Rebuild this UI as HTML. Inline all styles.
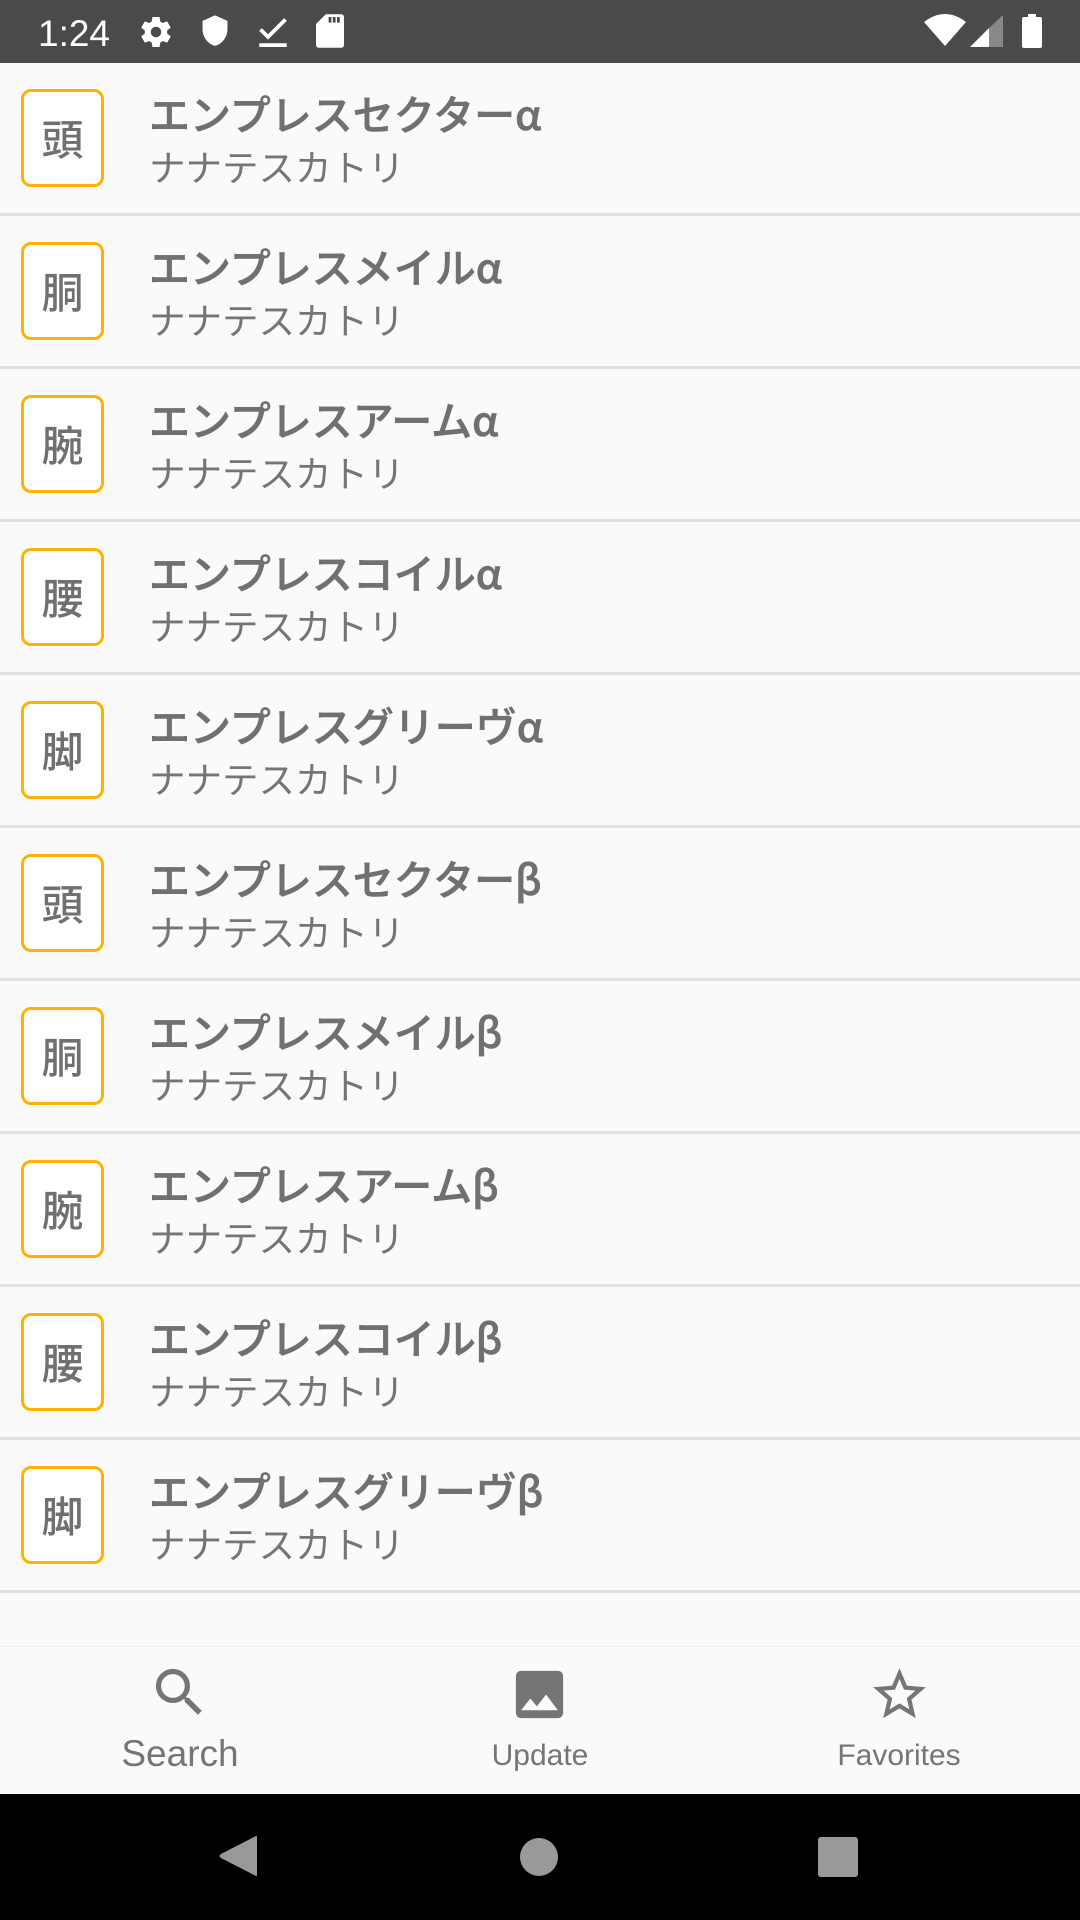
<!DOCTYPE html>
<html><head><meta charset="utf-8"><style>
*{margin:0;padding:0;box-sizing:border-box}
body{width:1080px;height:1920px;background:#fafafa;position:relative;overflow:hidden;font-family:"Liberation Sans","Noto Sans CJK JP",sans-serif}
.sb{position:absolute;left:0;top:0;width:1080px;height:63px;background:#4a4a4a}
.time{position:absolute;left:38px;top:13px;color:#fff;font-size:37px;font-family:"Liberation Sans",sans-serif}
.row{position:absolute;left:0;width:1080px;height:153px;border-bottom:3px solid #e0e0e0}
.box{position:absolute;left:21px;top:26px;width:83px;height:98px;border:3px solid #ffb300;border-radius:10px;background:#fff;color:#707070;font-size:42px;font-weight:500;line-height:92px;text-align:center;font-family:"Noto Sans CJK JP",sans-serif}
.t{position:absolute;left:149px;top:22px;color:#707070;font-size:41px;font-weight:500;font-family:"Noto Sans CJK JP",sans-serif;line-height:54px;white-space:nowrap;-webkit-text-stroke:0.6px #707070}
.s{position:absolute;left:149px;top:79px;color:#757575;font-size:36.5px;font-family:"Noto Sans CJK JP",sans-serif;line-height:48px;white-space:nowrap}
.bn{position:absolute;left:0;top:1646px;width:1080px;height:148px;background:#fafafa;border-top:1px solid #eee}
.lab{position:absolute;color:#757575;text-align:center;width:300px}
.nav{position:absolute;left:0;top:1794px;width:1080px;height:126px;background:#000}
</style></head><body>
<div class="sb">
<div class="time">1:24</div>
<svg style="position:absolute;left:138px;top:14px" width="36" height="36" viewBox="0 0 24 24"><path fill="#fff" d="M19.4 13c.04-.33.06-.66.06-1s-.02-.67-.06-1l2.1-1.65c.2-.15.25-.42.12-.64l-2-3.46c-.12-.22-.39-.3-.61-.22l-2.49 1c-.52-.4-1.08-.73-1.69-.98l-.38-2.65A.49.49 0 0 0 14 2h-4c-.25 0-.46.18-.49.42l-.38 2.65c-.61.25-1.17.59-1.69.98l-2.49-1c-.23-.09-.49 0-.61.22l-2 3.46c-.13.22-.07.49.12.64L4.57 11c-.04.33-.07.67-.07 1s.03.67.07 1l-2.11 1.65c-.19.15-.24.42-.12.64l2 3.46c.12.22.39.3.61.22l2.49-1c.52.4 1.08.73 1.69.98l.38 2.65c.03.24.24.42.49.42h4c.25 0 .46-.18.49-.42l.38-2.65c.61-.25 1.17-.59 1.69-.98l2.49 1c.23.09.49 0 .61-.22l2-3.46c.12-.22.07-.49-.12-.64L19.4 13zM12 15.5a3.5 3.5 0 1 1 0-7 3.5 3.5 0 0 1 0 7z"/></svg>
<svg style="position:absolute;left:198px;top:14px" width="34" height="36" viewBox="0 0 24 26"><path fill="#fff" d="M12 1 3 5v6c0 5.5 3.8 10.7 9 12 5.2-1.3 9-6.5 9-12V5z"/></svg>
<svg style="position:absolute;left:258px;top:14px" width="30" height="36" viewBox="0 0 24 28"><path fill="none" stroke="#fff" stroke-width="3" d="M2 12l6 6L22 4"/><rect x="1" y="23" width="22" height="3" fill="#fff"/></svg>
<svg style="position:absolute;left:316px;top:14px" width="28" height="34" viewBox="0 0 20 24"><path fill="#fff" d="M7 0h11a2 2 0 0 1 2 2v20a2 2 0 0 1-2 2H2a2 2 0 0 1-2-2V7z"/><rect x="9" y="2" width="2" height="4" fill="#4a4a4a"/><rect x="12" y="2" width="2" height="4" fill="#4a4a4a"/><rect x="15" y="2" width="2" height="4" fill="#4a4a4a"/></svg>
<svg style="position:absolute;left:924px;top:14px" width="42" height="32" viewBox="0 0 42 32"><path fill="#fff" d="M0 8Q21-8 42 8L21 32z"/></svg>
<svg style="position:absolute;left:970px;top:15px" width="33" height="32" viewBox="0 0 33 32"><path fill="#fff" d="M0 32L19 13V32z"/><path fill="#888" d="M19 13L33 0V32H19z"/></svg>
<svg style="position:absolute;left:1022px;top:14px" width="20" height="34" viewBox="0 0 20 34"><rect x="6" y="0" width="8" height="4" fill="#fff"/><rect x="0" y="3" width="20" height="31" rx="2" fill="#fff"/></svg>
</div>

<div class="row" style="top:63px"><div class="box">頭</div><div class="t">エンプレスセクターα</div><div class="s">ナナテスカトリ</div></div>
<div class="row" style="top:216px"><div class="box">胴</div><div class="t">エンプレスメイルα</div><div class="s">ナナテスカトリ</div></div>
<div class="row" style="top:369px"><div class="box">腕</div><div class="t">エンプレスアームα</div><div class="s">ナナテスカトリ</div></div>
<div class="row" style="top:522px"><div class="box">腰</div><div class="t">エンプレスコイルα</div><div class="s">ナナテスカトリ</div></div>
<div class="row" style="top:675px"><div class="box">脚</div><div class="t">エンプレスグリーヴα</div><div class="s">ナナテスカトリ</div></div>
<div class="row" style="top:828px"><div class="box">頭</div><div class="t">エンプレスセクターβ</div><div class="s">ナナテスカトリ</div></div>
<div class="row" style="top:981px"><div class="box">胴</div><div class="t">エンプレスメイルβ</div><div class="s">ナナテスカトリ</div></div>
<div class="row" style="top:1134px"><div class="box">腕</div><div class="t">エンプレスアームβ</div><div class="s">ナナテスカトリ</div></div>
<div class="row" style="top:1287px"><div class="box">腰</div><div class="t">エンプレスコイルβ</div><div class="s">ナナテスカトリ</div></div>
<div class="row" style="top:1440px"><div class="box">脚</div><div class="t">エンプレスグリーヴβ</div><div class="s">ナナテスカトリ</div></div>

<div class="bn">
<svg style="position:absolute;left:148px;top:14px" width="63" height="63" viewBox="0 0 24 24"><path fill="#757575" d="M15.5 14h-.79l-.28-.27A6.47 6.47 0 0 0 16 9.5 6.5 6.5 0 1 0 9.5 16c1.61 0 3.09-.59 4.23-1.57l.27.28v.79l5 4.99L20.49 19l-4.99-5zm-6 0C7.01 14 5 11.99 5 9.5S7.01 5 9.5 5 14 7.01 14 9.5 11.99 14 9.5 14z"/></svg>
<div class="lab" style="left:30px;top:86px;font-size:37px">Search</div>
<svg style="position:absolute;left:508px;top:16px" width="63" height="63" viewBox="0 0 24 24"><path fill="#757575" d="M21 19V5c0-1.1-.9-2-2-2H5c-1.1 0-2 .9-2 2v14c0 1.1.9 2 2 2h14c1.1 0 2-.9 2-2zM8.5 13.5l2.5 3.01L14.5 12l4.5 6H5l3.5-4.5z"/></svg>
<div class="lab" style="left:390px;top:92px;font-size:30px">Update</div>
<svg style="position:absolute;left:868px;top:16px" width="63" height="63" viewBox="0 0 24 24"><path fill="#757575" d="M22 9.24l-7.19-.62L12 2 9.19 8.63 2 9.24l5.46 4.73L5.82 21 12 17.27 18.18 21l-1.63-7.03L22 9.24zM12 15.4l-3.76 2.27 1-4.28-3.32-2.88 4.38-.38L12 6.1l1.71 4.04 4.38.38-3.32 2.88 1 4.28L12 15.4z"/></svg>
<div class="lab" style="left:749px;top:92px;font-size:30px">Favorites</div>
</div>

<div class="nav">
<svg style="position:absolute;left:218px;top:40px" width="40" height="44" viewBox="0 0 40 44"><path fill="#999" d="M38 2Q39 1 39 3V41Q39 43 38 42L3 24Q0 22 3 20z"/></svg>
<div style="position:absolute;left:520px;top:44px;width:38px;height:38px;border-radius:50%;background:#999"></div>
<div style="position:absolute;left:818px;top:43px;width:40px;height:40px;border-radius:3px;background:#999"></div>
</div>
</body></html>
